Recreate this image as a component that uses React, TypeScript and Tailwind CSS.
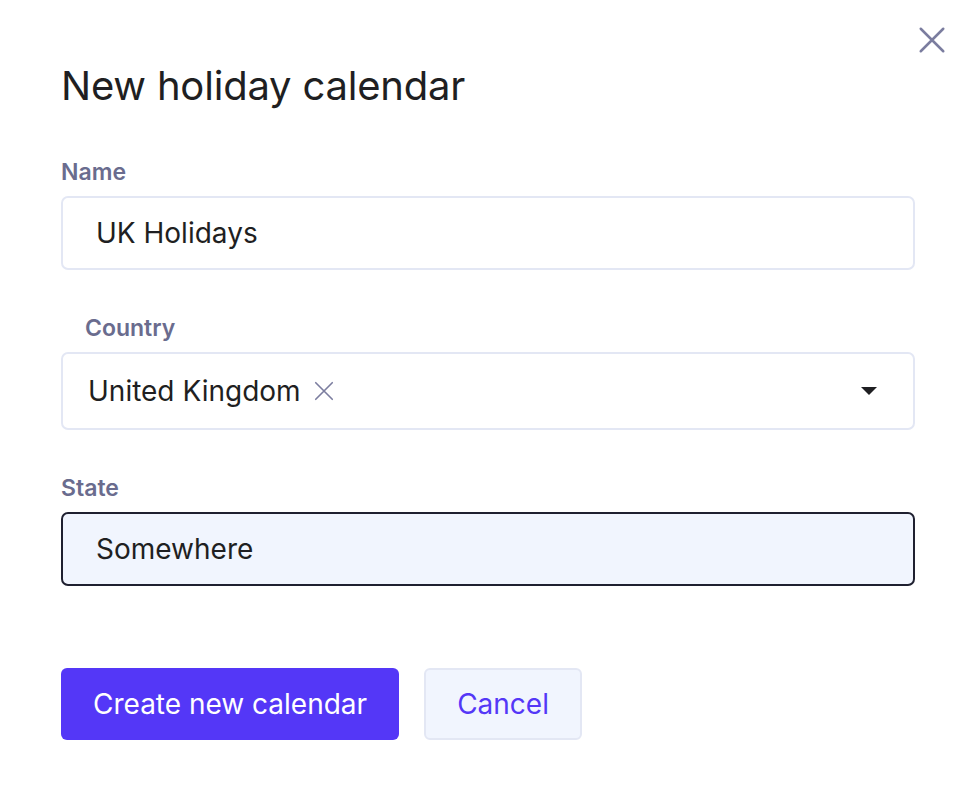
import React, { useState } from 'react';

const CloseIcon: React.FC<{ className?: string; width?: number }> = ({ className, width = 2 }) => (
  <svg className={className} viewBox="0 0 24 24" fill="none" stroke="currentColor" strokeWidth={width} strokeLinecap="round">
    <path d="M3 3l18 18M21 3L3 21" />
  </svg>
);

const App: React.FC = () => {
  const [name, setName] = useState('UK Holidays');
  const [state, setState] = useState('Somewhere');

  return (
    <div className="relative w-[980px] h-[800px] bg-white text-[#1f1f22]" style={{ fontFamily: 'Inter, "Noto Sans", sans-serif' }}>
      <button className="absolute right-[33px] top-[25px] text-[#7b7d9f]">
        <CloseIcon className="w-[30px] h-[30px]" width={2} />
      </button>

      <div className="pl-[61px] pr-[65px] pt-[62px]">
        <h2 className="text-[40px] leading-[48px] font-normal tracking-[-0.2px]">New holiday calendar</h2>

        <div className="mt-[49px]">
          <label className="block text-[23px] leading-[26px] font-semibold text-[#6a6c8e]">Name</label>
          <input
            value={name}
            onChange={e => setName(e.target.value)}
            className="mt-[11px] w-full h-[74px] px-[33px] rounded-[7px] border-2 border-[#e3e7f4] text-[28px] text-[#1f1f22] outline-none bg-white"
          />
        </div>

        <div className="mt-[45px]">
          <label className="block pl-[24px] text-[23px] leading-[26px] font-semibold text-[#6a6c8e]">Country</label>
          <div className="mt-[11px] w-full h-[78px] pl-[25px] pr-[36px] rounded-[7px] border-2 border-[#e3e7f4] flex items-center justify-between">
            <div className="flex items-center gap-[12px]">
              <span className="text-[28px]">United Kingdom</span>
              <CloseIcon className="w-[22px] h-[22px] text-[#7b7d9f]" width={1.8} />
            </div>
            <svg width="16" height="8" viewBox="0 0 16 8"><path d="M0 0h16L8 8z" fill="#1f1f22" /></svg>
          </div>
        </div>

        <div className="mt-[45px]">
          <label className="block text-[23px] leading-[26px] font-semibold text-[#6a6c8e]">State</label>
          <input
            value={state}
            onChange={e => setState(e.target.value)}
            className="mt-[11px] w-full h-[74px] px-[33px] rounded-[7px] border-2 border-[#1f2030] bg-[#f1f5fe] text-[28px] text-[#1f1f22] outline-none"
          />
        </div>

        <div className="mt-[82px] flex gap-[25px]">
          <button className="h-[72px] px-[32px] rounded-[6px] bg-[#5437f7] text-white text-[28px]">Create new calendar</button>
          <button className="h-[72px] px-[31px] rounded-[6px] bg-[#f1f5fe] border-2 border-[#e3e7f4] text-[#5437f7] text-[28px]">Cancel</button>
        </div>
      </div>
    </div>
  );
};

export default App;
